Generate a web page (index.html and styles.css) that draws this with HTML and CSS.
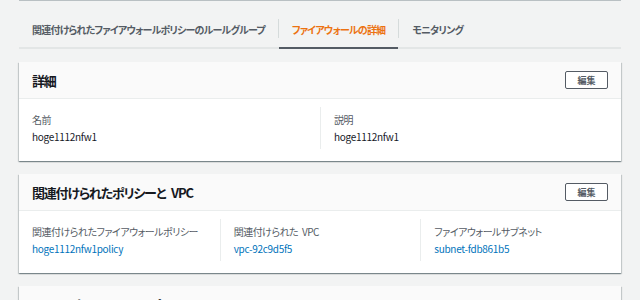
FILE: index.html
```html
<!DOCTYPE html>
<html lang="ja">
<head>
    <meta charset="UTF-8">
    <meta name="viewport" content="width=device-width, initial-scale=1.0">
    <title>ファイアウォールの詳細</title>
    <link rel="stylesheet" href="styles.css">
</head>
<body>
    <div class="page">
        <div class="top-edge"></div>

        <div class="tabs">
            <div class="tab">関連付けられたファイアウォールポリシーのルールグループ</div>
            <span class="tab-sep"></span>
            <div class="tab active">ファイアウォールの詳細</div>
            <span class="tab-sep"></span>
            <div class="tab">モニタリング</div>
        </div>

        <div class="card">
            <div class="card-header">
                <h2>詳細</h2>
                <button class="btn">編集</button>
            </div>
            <div class="card-body cols-2">
                <div class="col">
                    <div class="label">名前</div>
                    <div class="value">hoge1112nfw1</div>
                </div>
                <div class="col">
                    <div class="label">説明</div>
                    <div class="value">hoge1112nfw1</div>
                </div>
            </div>
        </div>

        <div class="card">
            <div class="card-header">
                <h2>関連付けられたポリシーと VPC</h2>
                <button class="btn">編集</button>
            </div>
            <div class="card-body cols-3">
                <div class="col">
                    <div class="label">関連付けられたファイアウォールポリシー</div>
                    <a class="value link" href="#">hoge1112nfw1policy</a>
                </div>
                <div class="col">
                    <div class="label">関連付けられた VPC</div>
                    <a class="value link" href="#">vpc-92c9d5f5</a>
                </div>
                <div class="col">
                    <div class="label">ファイアウォールサブネット</div>
                    <a class="value link" href="#">subnet-fdb861b5</a>
                </div>
            </div>
        </div>

        <div class="card">
            <div class="card-header">
                <h2>ファイアウォールエンドポイント</h2>
            </div>
        </div>
    </div>
</body>
</html>
```

FILE: styles.css
```css
body {
    margin: 0;
    background-color: #f2f3f3;
    font-family: "Noto Sans CJK JP", "Noto Sans", sans-serif;
    font-feature-settings: "palt";
    color: #16191f;
}
.page {
    padding: 0 19px;
}
.top-edge {
    height: 1px;
    background-color: #b9c0c3;
}

/* tabs */
.tabs {
    display: flex;
    align-items: flex-end;
    border-bottom: 2px solid #e3e6e6;
}
.tab {
    padding: 18px 13px 7px;
    margin-bottom: -2px;
    border-bottom: 2px solid transparent;
    font-size: 10px;
    font-weight: bold;
    line-height: 21px;
    letter-spacing: -0.8px;
    color: #545b64;
    white-space: nowrap;
}
.tab.active {
    color: #ec7211;
    border-bottom-color: #545b64;
}
.tab-sep {
    align-self: stretch;
    width: 1px;
    margin: 18px 0 9px;
    background-color: #d5dbdb;
}

/* cards */
.card {
    margin-top: 13px;
    background-color: #fff;
    box-shadow: 0 1px 1px 0 rgba(0, 28, 36, 0.3), 1px 1px 1px 0 rgba(0, 28, 36, 0.15), -1px 1px 1px 0 rgba(0, 28, 36, 0.15);
}
.card-header {
    display: flex;
    justify-content: space-between;
    align-items: center;
    height: 36px;
    padding: 0 13px;
    background-color: #fafafa;
    border-bottom: 1px solid #eaeded;
}
.card-header h2 {
    margin: 0;
    font-size: 13px;
    font-weight: bold;
    letter-spacing: -1.2px;
    word-spacing: 4px;
    color: #16191f;
}
.btn {
    width: 43px;
    height: 18px;
    padding: 0;
    background-color: #fff;
    border: 1px solid #545b64;
    border-radius: 2px;
    font-family: inherit;
    font-feature-settings: "palt";
    font-size: 9px;
    font-weight: bold;
    color: #545b64;
}
.card-body {
    display: grid;
    padding: 8px 0 12px;
}
.cols-2 {
    grid-template-columns: 1fr 1fr;
}
.cols-3 {
    grid-template-columns: 1fr 1fr 1fr;
}
.col {
    padding: 5px 13px 4px;
}
.col + .col {
    border-left: 1px solid #eaeded;
}
.label {
    font-size: 10px;
    line-height: 16px;
    letter-spacing: -0.5px;
    word-spacing: 2px;
    color: #545b64;
    white-space: nowrap;
}
.value {
    display: block;
    font-size: 10px;
    line-height: 17px;
    letter-spacing: -0.3px;
    color: #16191f;
}
.link {
    color: #0073bb;
    text-decoration: none;
}
```
